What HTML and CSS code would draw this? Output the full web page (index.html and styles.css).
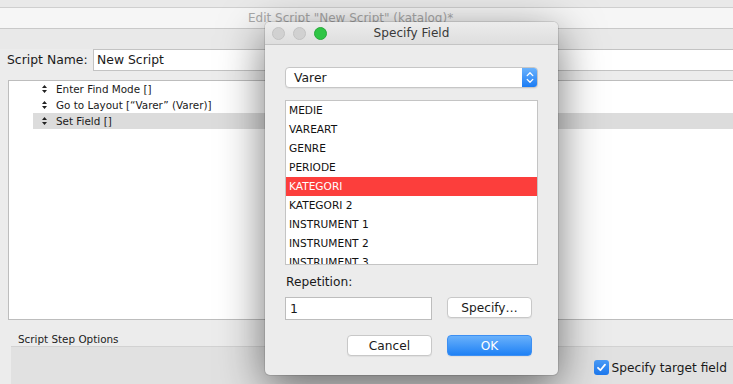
FILE: index.html
```html
<!DOCTYPE html>
<html lang="en">
<head>
  <meta charset="UTF-8" />
  <title>Edit Script - Specify Field</title>
  <link rel="stylesheet" href="styles.css">
</head>
<body>

  <div class="win">
    <div class="top-strip"></div>
    <div class="titlebar">Edit Script "New Script" (katalog)*</div>
    <div class="toolbar"></div>

    <div class="name-row">
      <span class="name-label">Script Name:</span>
      <div class="name-field">New Script</div>
    </div>

    <div class="steps">
      <div class="step"><span class="grip"><svg width="5" height="8" viewBox="0 0 5 8"><path d="M2.5 0 L5 3 L0 3 Z M0 5 L5 5 L2.5 8 Z" fill="#222"/></svg></span>Enter Find Mode []</div>
      <div class="step"><span class="grip"><svg width="5" height="8" viewBox="0 0 5 8"><path d="M2.5 0 L5 3 L0 3 Z M0 5 L5 5 L2.5 8 Z" fill="#222"/></svg></span>Go to Layout [“Varer” (Varer)]</div>
      <div class="step selected"><span class="grip"><svg width="5" height="8" viewBox="0 0 5 8"><path d="M2.5 0 L5 3 L0 3 Z M0 5 L5 5 L2.5 8 Z" fill="#222"/></svg></span>Set Field []</div>
    </div>

    <div class="options-label">Script Step Options</div>
    <div class="options-panel">
      <label class="check">
        <span class="box">
          <svg width="11" height="11" viewBox="0 0 11 11"><path d="M2 5.8 L4.4 8.2 L9 2.6" fill="none" stroke="#fff" stroke-width="1.8" stroke-linecap="round" stroke-linejoin="round"/></svg>
        </span>
        Specify target field
      </label>
    </div>
  </div>

  <div class="dialog">
    <div class="dlg-title">
      <div class="lights">
        <span class="light"></span>
        <span class="light"></span>
        <span class="light green"></span>
      </div>
      Specify Field
    </div>

    <div class="dlg-body">
      <div class="popup">
        <span class="popup-text">Varer</span>
        <span class="stepper">
          <svg width="8" height="13" viewBox="0 0 8 13"><path d="M1.2 4.6 L4 1.8 L6.8 4.6 M1.2 8.4 L4 11.2 L6.8 8.4" fill="none" stroke="#fff" stroke-width="1.3" stroke-linecap="round" stroke-linejoin="round"/></svg>
        </span>
      </div>

      <ul class="fields">
        <li>MEDIE</li>
        <li>VAREART</li>
        <li>GENRE</li>
        <li>PERIODE</li>
        <li class="active">KATEGORI</li>
        <li>KATEGORI 2</li>
        <li>INSTRUMENT 1</li>
        <li>INSTRUMENT 2</li>
        <li>INSTRUMENT 3</li>
      </ul>

      <div class="rep-label">Repetition:</div>
      <div class="rep-row">
        <div class="rep-field">1</div>
        <button class="btn">Specify…</button>
      </div>

      <div class="actions">
        <button class="btn">Cancel</button>
        <button class="btn primary">OK</button>
      </div>
    </div>
  </div>

</body>
</html>
```

FILE: styles.css
```css
body {
  margin: 0;
  width: 733px;
  height: 384px;
  overflow: hidden;
  background: #ececec;
  font-family: "DejaVu Sans", sans-serif;
  color: #1a1a1a;
  position: relative;
}
.win {
  display: flex;
  flex-direction: column;
  height: 384px;
}
.top-strip {
  height: 7px;
  background: #e9e9e9;
}
.titlebar {
  height: 20px;
  border-top: 1px solid #cfcfcf;
  background: #f6f6f6;
  color: #a9a9a9;
  font-size: 12px;
  line-height: 21px;
  padding-left: 248px;
}
.toolbar {
  height: 20px;
  border-top: 1px solid #c9c9c9;
  background: #e9e9e9;
}
.name-row {
  display: flex;
  align-items: flex-start;
  height: 31px;
  background: #ececec;
}
.name-label {
  font-size: 12.4px;
  line-height: 22px;
  margin-left: 7px;
  width: 86px;
}
.name-field {
  flex: 1;
  height: 20px;
  border-top: 1px solid #c3c3c3;
  border-bottom: 1px solid #c3c3c3;
  border-left: 1px solid #c3c3c3;
  background: #fff;
  font-size: 12.4px;
  line-height: 20px;
  padding-left: 3px;
}
.steps {
  margin-left: 8px;
  height: 238px;
  border: 1px solid #bdbdbd;
  border-right: none;
  background: #fff;
}
.step {
  display: flex;
  align-items: center;
  height: 16px;
  margin-left: 24px;
  font-size: 10.4px;
  color: #1a1a1a;
}
.step.selected {
  background: #dcdcdc;
}
.grip {
  width: 23px;
  display: flex;
  justify-content: center;
}
.options-label {
  font-size: 10.4px;
  margin: 12px 0 0 18px;
  height: 14px;
  line-height: 14px;
  color: #222;
}
.options-panel {
  flex: 1;
  margin: 0 0 0 11px;
  background: #e1e1e1;
  border-top: 1px solid #d2d2d2;
  display: flex;
  justify-content: flex-end;
  align-items: flex-start;
  padding-top: 13px;
}
.check {
  display: flex;
  align-items: center;
  font-size: 12.2px;
  margin-right: 6px;
}
.box {
  width: 15px;
  height: 15px;
  border-radius: 3px;
  background: linear-gradient(#4a9cf8, #1c78ee);
  display: flex;
  align-items: center;
  justify-content: center;
  margin-right: 3px;
}

.dialog {
  position: absolute;
  left: 265px;
  top: 22px;
  width: 293px;
  height: 353px;
  background: #ececec;
  border-radius: 5px;
  box-shadow: 0 0 0 1px rgba(0, 0, 0, 0.1), 0 12px 45px rgba(0, 0, 0, 0.55);
  overflow: hidden;
}
.dlg-title {
  position: relative;
  height: 22px;
  border-bottom: 1px solid #c4c4c4;
  background: linear-gradient(#ececec, #dedede);
  text-align: center;
  font-size: 12.1px;
  line-height: 23px;
  color: #3a3a3a;
}
.lights {
  position: absolute;
  left: 7px;
  top: 5px;
  display: flex;
  gap: 8px;
}
.light {
  width: 11px;
  height: 11px;
  border-radius: 50%;
  background: #d1d1d1;
  border: 0.5px solid #c2c2c2;
}
.light.green {
  background: #2fc545;
  border-color: #28a93b;
}
.dlg-body {
  padding: 22px 20px 0;
}
.popup {
  display: flex;
  width: 251px;
  height: 19px;
  border: 1px solid #c6c6c6;
  border-radius: 4px;
  background: #fff;
  box-shadow: 0 1px 1px rgba(0, 0, 0, 0.05);
}
.popup-text {
  flex: 1;
  font-size: 12.4px;
  line-height: 19px;
  padding-left: 8px;
}
.stepper {
  width: 15px;
  height: 19px;
  border-radius: 0 3px 3px 0;
  background: linear-gradient(#6ab2fd, #1b7cf4);
  display: flex;
  align-items: center;
  justify-content: center;
}
.fields {
  list-style: none;
  margin: 12px 0 0;
  padding: 0;
  width: 251px;
  height: 163px;
  border: 1px solid #c4c4c4;
  background: #fff;
  overflow: hidden;
}
.fields li {
  height: 19px;
  line-height: 19px;
  font-size: 10.6px;
  padding-left: 3px;
  color: #111;
}
.fields li.active {
  background: #fc3e3c;
  color: #fff;
}
.rep-label {
  margin-top: 9px;
  font-size: 12.2px;
  line-height: 16px;
  padding-left: 1px;
}
.rep-row {
  display: flex;
  align-items: flex-start;
  gap: 15px;
  width: 247px;
  margin-top: 7px;
}
.rep-field {
  width: 141px;
  height: 21px;
  border: 1px solid #bdbdbd;
  background: #fff;
  font-size: 12.4px;
  line-height: 22px;
  padding-left: 4px;
}
.btn {
  width: 85px;
  height: 21px;
  border: 1px solid #c8c8c8;
  border-radius: 4px;
  background: #fff;
  font-family: "DejaVu Sans", sans-serif;
  font-size: 12.2px;
  color: #1a1a1a;
  padding: 0;
  box-shadow: 0 1px 1px rgba(0, 0, 0, 0.06);
}
.btn.primary {
  border-color: #3d8ff2;
  background: linear-gradient(#69b1fb, #1f81f5);
  color: #fff;
}
.actions {
  display: flex;
  justify-content: flex-end;
  gap: 15px;
  width: 247px;
  margin-top: 15px;
}
```
